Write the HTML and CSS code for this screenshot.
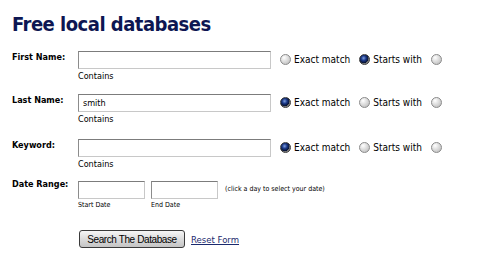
FILE: index.html
```html
<!DOCTYPE html>
<html>
<head>
<meta charset="utf-8">
<link rel="stylesheet" href="styles.css">
</head>
<body>
<div class="page">
  <h1 class="title">Free local databases</h1>
  <form class="form">
    <div class="row row-first">
      <div class="label">First Name:</div>
      <div class="field">
        <div class="line">
          <input class="text" type="text" value="">
          <label class="opt"><input class="radio" type="radio" name="fn">Exact match</label>
          <label class="opt"><input class="radio" type="radio" name="fn" checked>Starts with</label>
          <label class="opt"><input class="radio" type="radio" name="fn"></label>
        </div>
        <div class="hint">Contains</div>
      </div>
    </div>
    <div class="row row-last">
      <div class="label">Last Name:</div>
      <div class="field">
        <div class="line">
          <input class="text" type="text" value="smith">
          <label class="opt"><input class="radio" type="radio" name="ln" checked>Exact match</label>
          <label class="opt"><input class="radio" type="radio" name="ln">Starts with</label>
          <label class="opt"><input class="radio" type="radio" name="ln"></label>
        </div>
        <div class="hint">Contains</div>
      </div>
    </div>
    <div class="row row-kw">
      <div class="label">Keyword:</div>
      <div class="field">
        <div class="line">
          <input class="text" type="text" value="">
          <label class="opt"><input class="radio" type="radio" name="kw" checked>Exact match</label>
          <label class="opt"><input class="radio" type="radio" name="kw">Starts with</label>
          <label class="opt"><input class="radio" type="radio" name="kw"></label>
        </div>
        <div class="hint">Contains</div>
      </div>
    </div>
    <div class="row row-date">
      <div class="label">Date Range:</div>
      <div class="field dates">
        <div class="date">
          <input class="text short" type="text">
          <div class="tiny">Start Date</div>
        </div>
        <div class="date">
          <input class="text short" type="text">
          <div class="tiny">End Date</div>
        </div>
        <div class="tip">(click a day to select your date)</div>
      </div>
    </div>
    <div class="actions">
      <button class="btn" type="button">Search The Database</button>
      <a class="reset" href="#">Reset Form</a>
    </div>
  </form>
</div>
</body>
</html>
```

FILE: styles.css
```css
html, body {
  margin: 0;
  padding: 0;
  background: #ffffff;
}
.page {
  padding: 0 0 0 12px;
  font-family: "DejaVu Sans Condensed", "DejaVu Sans", Verdana, sans-serif;
  color: #000;
}
.title {
  margin: 0;
  padding-top: 12px;
  height: 32px;
  font-size: 20px;
  line-height: 24px;
  font-weight: bold;
  color: #0d1652;
  letter-spacing: -0.5px;
}
.form {
  margin: 0;
}
.row {
  display: grid;
  grid-template-columns: 66px auto;
}
.row-first { margin-top: 7px; height: 43px; }
.row-last { height: 45px; }
.row-kw { height: 39px; }
.row-date { height: 52px; }
.label {
  font-size: 9px;
  font-weight: bold;
  line-height: 12px;
  padding-top: 0;
}
.line {
  display: flex;
  align-items: center;
  height: 17px;
}
.text {
  box-sizing: border-box;
  width: 193px;
  height: 18px;
  margin: 0;
  padding: 0 4px;
  border: 1px solid #c8c8c8;
  border-top-color: #7c7c7c;
  border-left-color: #8c8c8c;
  font-family: inherit;
  font-size: 9px;
  color: #000;
  background: #fff;
  outline: none;
}
.text.short {
  width: 67px;
}
.opt {
  display: flex;
  align-items: center;
  font-size: 10px;
  margin-left: 9px;
}
.radio {
  appearance: none;
  -webkit-appearance: none;
  box-sizing: border-box;
  width: 11px;
  height: 11px;
  margin: 0 3px 0 0;
  border-radius: 50%;
  border: 1px solid #8a8a8a;
  background: radial-gradient(circle at 35% 30%, #ffffff 0%, #e4e4e4 35%, #b4b4b4 100%);
}
.radio:checked {
  border-color: #3a3a3a;
  background: radial-gradient(circle at 40% 35%, #7fa0e0 0%, #1c3a8a 30%, #051030 60%, #6a6a6a 62%, #bdbdbd 100%);
}
.hint {
  font-size: 9px;
  line-height: 12px;
  margin-top: 2px;
}
.dates {
  display: flex;
  align-items: flex-start;
}
.date {
  margin-right: 6px;
}
.tiny {
  font-size: 7px;
  line-height: 10px;
  margin-top: 1px;
}
.tip {
  font-size: 7px;
  margin-top: 7px;
  margin-left: 1px;
}
.actions {
  display: flex;
  align-items: center;
  padding-left: 67px;
  height: 18px;
}
.btn {
  box-sizing: border-box;
  width: 106px;
  height: 18px;
  padding: 0;
  border: 1px solid #3a3a3a;
  border-radius: 3px;
  background: linear-gradient(#f6f6f6, #dcdcdc 50%, #c4c4c4);
  font-family: "Liberation Sans", Arial, sans-serif;
  font-size: 10px;
  letter-spacing: -0.4px;
  color: #000;
}
.reset {
  margin-left: 6px;
  font-size: 9.5px;
  color: #1b2a6e;
  text-decoration: underline;
}
```
